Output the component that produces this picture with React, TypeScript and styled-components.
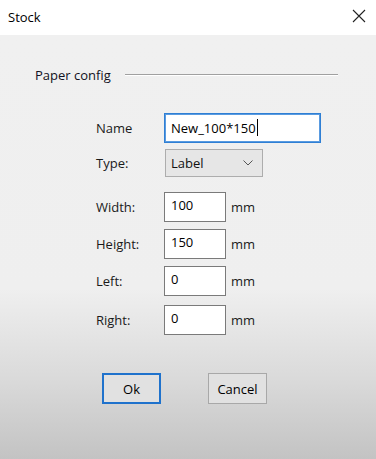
import React from 'react';
import styled, { createGlobalStyle } from 'styled-components';

const GlobalStyle = createGlobalStyle`
  html, body {
    margin: 0;
    padding: 0;
  }
  body {
    font-family: 'Open Sans', 'Noto Sans', 'DejaVu Sans', sans-serif;
    font-size: 13px;
    color: #111;
  }
`;

type Field = {
  label: string;
  value: string;
  top: number;
};

const sizeFields: Field[] = [
  { label: 'Width:', value: '100', top: 15 },
  { label: 'Height:', value: '150', top: 7 },
  { label: 'Left:', value: '0', top: 7 },
  { label: 'Right:', value: '0', top: 9 },
];

export default function App() {
  return (
    <>
      <GlobalStyle />
      <Window>
        <TitleBar>
          <Title>Stock</Title>
          <CloseButton aria-label="Close">
            <svg width="14" height="14" viewBox="0 0 14 14">
              <path d="M1 1 L13 13 M13 1 L1 13" stroke="#222" strokeWidth="1.1" fill="none" />
            </svg>
          </CloseButton>
        </TitleBar>
        <Body>
          <GroupHeader>
            <GroupTitle>Paper config</GroupTitle>
            <GroupLine />
          </GroupHeader>
          <Form>
            <Row $top={0}>
              <Label>Name</Label>
              <TextBox $width={157} $focused>
                New_100*150
                <Caret />
              </TextBox>
            </Row>
            <Row $top={6}>
              <Label>Type:</Label>
              <Select>
                <span>Label</span>
                <svg width="10" height="6" viewBox="0 0 10 6">
                  <path d="M0.5 0.5 L5 5 L9.5 0.5" stroke="#555" strokeWidth="1" fill="none" />
                </svg>
              </Select>
            </Row>
            {sizeFields.map((f) => (
              <Row key={f.label} $top={f.top}>
                <Label>{f.label}</Label>
                <TextBox $width={62}>{f.value}</TextBox>
                <Unit>mm</Unit>
              </Row>
            ))}
          </Form>
          <ButtonRow>
            <Button $default>Ok</Button>
            <Button>Cancel</Button>
          </ButtonRow>
        </Body>
      </Window>
    </>
  );
}

const Window = styled.div`
  width: 376px;
  height: 459px;
  display: flex;
  flex-direction: column;
  overflow: hidden;
`;

const TitleBar = styled.div`
  height: 35px;
  flex-shrink: 0;
  background: #ffffff;
  display: flex;
  align-items: center;
  justify-content: space-between;
  padding: 0 10px 0 8px;
  box-sizing: border-box;
`;

const Title = styled.div`
  font-size: 13px;
  color: #000;
  padding-bottom: 2px;
`;

const CloseButton = styled.div`
  display: flex;
  align-items: center;
  padding-bottom: 3px;
`;

const Body = styled.div`
  flex: 1;
  background: linear-gradient(
    to bottom,
    #f0f0f0 0%,
    #efefef 60%,
    #d9d9d9 82%,
    #c3c3c3 100%
  );
  padding-top: 31px;
  box-sizing: border-box;
`;

const GroupHeader = styled.div`
  display: flex;
  align-items: center;
  padding: 0 38px 0 35px;
  height: 18px;
`;

const GroupTitle = styled.span`
  font-size: 13px;
  color: #111122;
`;

const GroupLine = styled.div`
  flex: 1;
  height: 1px;
  margin-left: 14px;
  background: #a0a0a0;
  border-bottom: 1px solid #ffffff;
`;

const Form = styled.div`
  display: flex;
  flex-direction: column;
  padding-left: 96px;
  margin-top: 29px;
`;

const Row = styled.div<{ $top: number }>`
  display: flex;
  align-items: center;
  margin-top: ${(p) => p.$top}px;
`;

const Label = styled.div`
  width: 68px;
  font-size: 13px;
  color: #1a1a1a;
`;

const TextBox = styled.div<{ $width: number; $focused?: boolean }>`
  width: ${(p) => p.$width}px;
  height: 30px;
  box-sizing: border-box;
  background: #ffffff;
  border: 1px solid ${(p) => (p.$focused ? '#2f7fd4' : '#7a7a7a')};
  box-shadow: ${(p) => (p.$focused ? 'inset 0 0 0 1px #5a9be0' : 'none')};
  padding: ${(p) => (p.$focused ? '5px 0 0 6px' : '3px 0 0 6px')};
  font-size: 13px;
  color: #000;
  display: flex;
  align-items: flex-start;
`;

const Caret = styled.span`
  display: inline-block;
  width: 1px;
  height: 17px;
  margin-left: 1px;
  background: #000;
`;

const Select = styled.div`
  width: 98px;
  height: 28px;
  margin-left: 1px;
  box-sizing: border-box;
  background: #e6e6e6;
  border: 1px solid #adadad;
  display: flex;
  align-items: center;
  justify-content: space-between;
  padding: 0 9px 0 5px;
  font-size: 13px;
  color: #111;
`;

const Unit = styled.span`
  margin-left: 5px;
  font-size: 13px;
  color: #1a1a1a;
`;

const ButtonRow = styled.div`
  display: flex;
  gap: 47px;
  padding-left: 102px;
  margin-top: 38px;
`;

const Button = styled.div<{ $default?: boolean }>`
  width: 59px;
  height: 31px;
  box-sizing: border-box;
  display: flex;
  align-items: center;
  justify-content: center;
  background: #e1e1e1;
  border: ${(p) => (p.$default ? '2px solid #1f72cc' : '1px solid #a8a8a8')};
  font-size: 13px;
  color: #000;
`;
